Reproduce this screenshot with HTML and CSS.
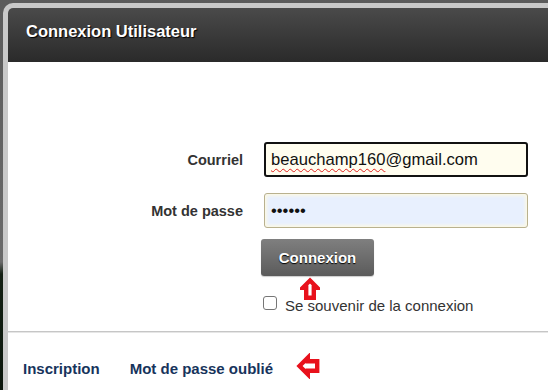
FILE: index.html
```html
<!DOCTYPE html>
<html lang="fr">
<head>
<meta charset="utf-8">
<title>Connexion Utilisateur</title>
<link rel="stylesheet" href="styles.css">
</head>
<body>
<div class="dialog">
  <header class="dialog-header">
    <h1 class="dialog-title">Connexion Utilisateur</h1>
  </header>
  <div class="dialog-body">
    <form class="login-form">
      <label class="field-label" for="email">Courriel</label>
      <div class="input input-focus" id="email"><span class="misspelled">beauchamp160</span>@gmail.com</div>
      <label class="field-label" for="password">Mot de passe</label>
      <div class="input input-autofill" id="password">••••••</div>
    </form>
    <div class="actions">
      <button type="button" class="btn">Connexion</button>
      <svg class="annot annot-up" width="20" height="23" viewBox="0 0 20 23" aria-hidden="true">
        <polygon points="10,3.5 17.3,10.8 13.8,10.8 13.8,20.7 6.2,20.7 6.2,10.8 2.7,10.8" fill="#fff" stroke="#e8111c" stroke-width="4.4" stroke-linejoin="miter"/>
      </svg>
      <label class="remember"><span class="checkbox"></span><span class="remember-text">Se souvenir de la connexion</span></label>
    </div>
  </div>
  <footer class="dialog-footer">
    <nav class="footer-links">
      <a class="footer-link">Inscription</a>
      <a class="footer-link">Mot de passe oublié</a>
    </nav>
    <svg class="annot-left" width="24" height="26" viewBox="0 0 24 26" aria-hidden="true">
      <polygon points="3.5,13 11.8,4.7 11.8,8.3 21.2,8.3 21.2,17.7 11.8,17.7 11.8,21.3" fill="#fff" stroke="#e8111c" stroke-width="4.4" stroke-linejoin="miter"/>
    </svg>
  </footer>
</div>
</body>
</html>
```

FILE: styles.css
```css
* { box-sizing: border-box; }

html, body {
  margin: 0;
  height: 100%;
  overflow: hidden;
}

body {
  background: linear-gradient(#5b5b5b 0, #6a6a6a 262px, #132013 274px, #0b160c 100%);
  font-family: "Liberation Sans", Arial, sans-serif;
}

.dialog {
  margin: 3px -20px 0 3px;
  height: 387px;
  border: 5px solid #c9c9c9;
  border-right: 0;
  border-bottom: 0;
  border-top-left-radius: 10px;
  background: #fff;
  overflow: hidden;
  display: flex;
  flex-direction: column;
}

.dialog-header {
  height: 54px;
  flex: none;
  padding: 14px 0 0 18px;
  background: linear-gradient(#4a4a4a, #2a2a2a);
}

.dialog-title {
  margin: 0;
  font-size: 16.5px;
  line-height: 18px;
  font-weight: 700;
  color: #fff;
  text-shadow: 1px 1px 1px #000;
}

.dialog-body {
  height: 269px;
  flex: none;
  padding-top: 80px;
}

.login-form {
  display: grid;
  grid-template-columns: 235px 264px;
  column-gap: 21px;
  row-gap: 16px;
  align-items: center;
}

.field-label {
  text-align: right;
  font-size: 14.5px;
  font-weight: 700;
  color: #333;
}

.input {
  height: 35px;
  border-radius: 3px;
  font-size: 16.6px;
  color: #111;
  display: flex;
  align-items: center;
  white-space: nowrap;
}

.input-focus {
  border: 2px solid #111;
  background: #fffdef;
  padding-left: 5px;
}

.misspelled {
  text-decoration: underline wavy #e0201c;
  text-decoration-thickness: 1px;
  text-underline-offset: 3px;
  text-decoration-skip-ink: none;
}

.input-autofill {
  border: 1px solid #b9b18e;
  background: #e8f0fe;
  box-shadow: inset 0 0 3px 2px #fbf8e6;
  padding-left: 6px;
  padding-top: 1px;
}

.actions {
  position: relative;
  margin-top: 11px;
  padding-left: 253px;
}

.btn {
  display: block;
  width: 113px;
  height: 37px;
  border: 0;
  border-radius: 3px;
  background: linear-gradient(#7f7f7f, #5b5b5b);
  box-shadow: 0 1px 1px rgba(0, 0, 0, 0.2);
  color: #fff;
  font-family: "Liberation Sans", Arial, sans-serif;
  font-size: 15px;
  font-weight: 700;
  text-shadow: 0 1px 1px #000;
  padding: 0;
}

.annot {
  position: absolute;
}

.annot-up {
  left: 292px;
  top: 38px;
}

.remember {
  display: flex;
  align-items: flex-start;
  gap: 8px;
  margin: 20px 0 0 2px;
  font-size: 15px;
  line-height: 17px;
  color: #333;
}

.checkbox {
  width: 14px;
  height: 14px;
  border: 1px solid #767676;
  border-radius: 3px;
  background: #fff;
  flex: none;
}

.remember-text {
  padding-top: 1px;
}

.dialog-footer {
  flex: 1;
  border-top: 1px solid #c6c6c6;
  box-shadow: inset 0 1px 0 #e6e6e6;
  padding: 28px 0 0 15px;
  display: flex;
  align-items: flex-start;
  gap: 23px;
}

.footer-links {
  display: flex;
  gap: 30px;
}

.footer-link {
  font-size: 15px;
  line-height: 17px;
  font-weight: 700;
  color: #17345c;
  text-decoration: none;
}

.annot-left {
  margin-top: -7px;
  flex: none;
}
```
